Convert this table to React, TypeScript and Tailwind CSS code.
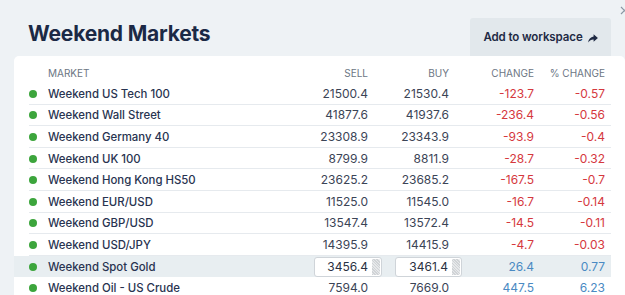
import React from "react";

type Row = { name: string; sell: string; buy: string; chg: string; pct: string; up?: boolean; active?: boolean };

const rows: Row[] = [
  { name: "Weekend US Tech 100", sell: "21500.4", buy: "21530.4", chg: "-123.7", pct: "-0.57" },
  { name: "Weekend Wall Street", sell: "41877.6", buy: "41937.6", chg: "-236.4", pct: "-0.56" },
  { name: "Weekend Germany 40", sell: "23308.9", buy: "23343.9", chg: "-93.9", pct: "-0.4" },
  { name: "Weekend UK 100", sell: "8799.9", buy: "8811.9", chg: "-28.7", pct: "-0.32" },
  { name: "Weekend Hong Kong HS50", sell: "23625.2", buy: "23685.2", chg: "-167.5", pct: "-0.7" },
  { name: "Weekend EUR/USD", sell: "11525.0", buy: "11545.0", chg: "-16.7", pct: "-0.14" },
  { name: "Weekend GBP/USD", sell: "13547.4", buy: "13572.4", chg: "-14.5", pct: "-0.11" },
  { name: "Weekend USD/JPY", sell: "14395.9", buy: "14415.9", chg: "-4.7", pct: "-0.03" },
  { name: "Weekend Spot Gold", sell: "3456.4", buy: "3461.4", chg: "26.4", pct: "0.77", up: true, active: true },
  { name: "Weekend Oil - US Crude", sell: "7594.0", buy: "7669.0", chg: "447.5", pct: "6.23", up: true },
];

const grid = "grid grid-cols-[19px_240px_80px_81px_85px_71px] pr-[6px]";

function PriceBox({ v, w, mr }: { v: string; w: string; mr: string }) {
  return (
    <div className={`flex h-[20px] items-center justify-end rounded-[3px] border border-[#cfd4d9] bg-white pr-[1px] ${w} ${mr}`}>
      <span className="text-[#2a3142]">{v}</span>
      <span
        className="ml-[4px] h-[16px] w-[8px] rounded-r-[2px] bg-[#dcdfe2]"
        style={{ backgroundImage: "repeating-linear-gradient(45deg, #d0d3d6 0 1px, #e6e8ea 1px 2px)" }}
      />
    </div>
  );
}

export default function App() {
  return (
    <div
      className="relative h-[295px] w-[625px] overflow-hidden bg-[#eef2f5]"
      style={{ fontFamily: "Inter, 'Open Sans', sans-serif" }}
    >
      <svg className="absolute right-[-4px] top-[6px]" width="9" height="9" viewBox="0 0 9 9">
        <path d="M1 1 L8 8 M8 1 L1 8" stroke="#8a96a3" strokeWidth="1.2" />
      </svg>
      <div className="flex h-[56px] items-start justify-between">
        <h1 className="pl-[28px] pt-[22px] text-[21px] font-bold leading-[24px] tracking-[-0.2px] text-[#1b2945]">
          Weekend Markets
        </h1>
        <button className="mr-[14px] mt-[18px] flex h-[38px] w-[141px] items-center justify-center gap-[5px] rounded-t-[3px] bg-[#e2e8ec] pt-[1px] text-[11.5px] font-semibold tracking-[-0.1px] text-[#1f2a44]">
          <span>Add to workspace</span>
          <svg width="10" height="9" viewBox="0 0 10 9" className="mt-[1px]">
            <path d="M5.6 0.2 L9.9 4 L5.6 7.8 V5.6 C3.4 5.5 1.7 6.4 0.1 8.6 C0.5 5.2 2.5 2.8 5.6 2.4 Z" fill="#1f2a44" />
          </svg>
        </button>
      </div>
      <div className="ml-[14px] h-[239px] rounded-tl-[5px] rounded-tr-[5px] bg-white pr-[14px]">
        <div className="pl-[15px]">
          <div className={`${grid} h-[27px] items-end pb-[4px] text-[10px] uppercase leading-[12px] text-[#6c7684]`}>
            <div />
            <div>Market</div>
            <div className="text-right">Sell</div>
            <div className="text-right">Buy</div>
            <div className="text-right">Change</div>
            <div className="text-right">% Change</div>
          </div>
        </div>
        {rows.map((r) => (
          <div key={r.name} className={`pl-[15px] ${r.active ? "bg-[#e8eef1]" : ""}`}>
            <div
              className={`${grid} h-[21.6px] items-center border-b pt-[1px] text-[12px] leading-[14px] ${
                r.active ? "border-transparent" : "border-[#e6eaee]"
              }`}
            >
              <div className="flex items-center">
                <span className="h-[8px] w-[8px] rounded-full bg-[#3ca53c]" />
              </div>
              <div className="text-[11.4px] font-medium text-[#283350]">{r.name}</div>
              <div className="flex justify-end text-[#3b4456]">
                {r.active ? <PriceBox v={r.sell} w="w-[68px]" mr="mr-[-14px]" /> : r.sell}
              </div>
              <div className="flex justify-end text-[#3b4456]">
                {r.active ? <PriceBox v={r.buy} w="w-[67px]" mr="mr-[-13px]" /> : r.buy}
              </div>
              <div className={`text-right ${r.up ? "text-[#4a8ac3]" : "text-[#d5383e]"}`}>{r.chg}</div>
              <div className={`text-right ${r.up ? "text-[#4a8ac3]" : "text-[#d5383e]"}`}>{r.pct}</div>
            </div>
          </div>
        ))}
      </div>
    </div>
  );
}
